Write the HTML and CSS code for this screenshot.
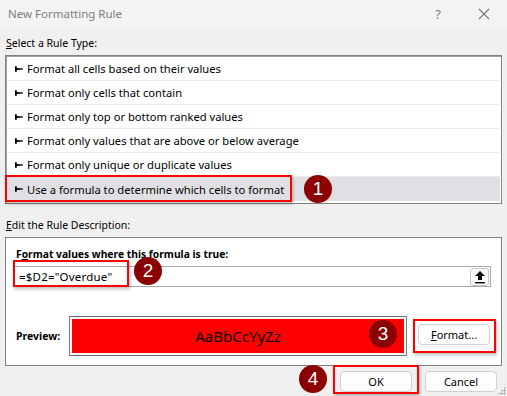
FILE: index.html
```html
<!DOCTYPE html>
<html>
<head>
<meta charset="utf-8">
<link rel="stylesheet" href="styles.css">
</head>
<body>
<div class="dialog">
  <div class="titlebar">
    <span class="title">New Formatting Rule</span>
    <span class="tb-help">?</span>
    <span class="tb-close">
      <svg width="12" height="12" viewBox="0 0 12 12"><path d="M1 1 L11 11 M11 1 L1 11" stroke="#777" stroke-width="1.1" fill="none"/></svg>
    </span>
  </div>
  <div class="section-label"><u>S</u>elect a Rule Type:</div>
  <div class="listbox">
    <div class="item"><svg class="arrow" width="8" height="6" viewBox="0 0 8 6"><path d="M0 0.3 H1.8 V2 L8 2.5 V3.5 L1.8 4 V5.7 H0 Z" fill="#000"/></svg>Format all cells based on their values</div>
    <div class="item"><svg class="arrow" width="8" height="6" viewBox="0 0 8 6"><path d="M0 0.3 H1.8 V2 L8 2.5 V3.5 L1.8 4 V5.7 H0 Z" fill="#000"/></svg>Format only cells that contain</div>
    <div class="item"><svg class="arrow" width="8" height="6" viewBox="0 0 8 6"><path d="M0 0.3 H1.8 V2 L8 2.5 V3.5 L1.8 4 V5.7 H0 Z" fill="#000"/></svg>Format only top or bottom ranked values</div>
    <div class="item"><svg class="arrow" width="8" height="6" viewBox="0 0 8 6"><path d="M0 0.3 H1.8 V2 L8 2.5 V3.5 L1.8 4 V5.7 H0 Z" fill="#000"/></svg>Format only values that are above or below average</div>
    <div class="item"><svg class="arrow" width="8" height="6" viewBox="0 0 8 6"><path d="M0 0.3 H1.8 V2 L8 2.5 V3.5 L1.8 4 V5.7 H0 Z" fill="#000"/></svg>Format only unique or duplicate values</div>
    <div class="item selected"><svg class="arrow" width="8" height="6" viewBox="0 0 8 6"><path d="M0 0.3 H1.8 V2 L8 2.5 V3.5 L1.8 4 V5.7 H0 Z" fill="#000"/></svg>Use a formula to determine which cells to format</div>
  </div>
  <div class="section-label second"><u>E</u>dit the Rule Description:</div>
  <div class="descbox">
    <div class="bold-label">F<u>o</u>rmat values where this formula is true:</div>
    <div class="formula-row">
      <span class="formula">=$D2="Overdue"</span>
      <span class="collapse-btn">
        <svg width="12" height="14" viewBox="0 0 12 14"><path d="M6 1 L11 6 L8 6 L8 10 L4 10 L4 6 L1 6 Z" fill="#000"/><rect x="1" y="12" width="10" height="1.4" fill="#000"/></svg>
      </span>
    </div>
    <div class="preview-row">
      <span class="bold-label">Preview:</span>
      <div class="preview-frame"><div class="preview-fill">AaBbCcYyZz</div></div>
      <button class="btn format-btn"><u>F</u>ormat...</button>
    </div>
  </div>
  <div class="footer">
    <button class="btn">OK</button>
    <button class="btn">Cancel</button>
  </div>
  <div class="grip"></div>

  <div class="hl hl1"></div>
  <div class="hl hl2"></div>
  <div class="hl hl3"></div>
  <div class="hl hl4"></div>
  <div class="badge b1">1</div>
  <div class="badge b2">2</div>
  <div class="badge b3">3</div>
  <div class="badge b4">4</div>
</div>
</body>
</html>
```
FILE: styles.css
```css
html, body {
  margin: 0;
  padding: 0;
  background: #f0f0f0;
}
.dialog {
  position: relative;
  width: 507px;
  height: 396px;
  overflow: hidden;
  font-family: "Noto Sans", "Open Sans", sans-serif;
  font-size: 11px;
  color: #000;
}
.titlebar {
  height: 27px;
  display: flex;
  align-items: center;
  padding-left: 8px;
  background: #f3f3f3;
}
.title {
  flex: 1;
  color: #808080;
  font-size: 11.5px;
}
.tb-help {
  color: #808080;
  font-size: 13px;
  width: 46px;
  text-align: center;
  margin-left: 4px;
}
.tb-close {
  width: 46px;
  display: flex;
  justify-content: center;
}
.section-label {
  padding: 8px 0 0 6px;
  height: 20px;
  line-height: 17px;
  font-size: 10.5px;
}
.section-label.second {
  padding-top: 13px;
  height: 20px;
}
.listbox {
  margin: 0 5px;
  border: 1px solid #828282;
  box-shadow: inset 1px 1px 0 #a0a0a0;
  background: #fff;
  padding: 1px 1px 2px 1px;
}
.item {
  height: 23px;
  line-height: 23px;
  border-bottom: 1px solid #ececec;
  padding-left: 8px;
  white-space: nowrap;
  display: flex;
  align-items: center;
  font-size: 11.2px;
}
.item:last-child {
  border-bottom: none;
  height: 24px;
}
.item.selected {
  background: #e0e0e4;
}
.arrow {
  margin-right: 4px;
  flex: none;
}
.descbox {
  margin: 0 5px;
  border: 1px solid #828282;
  background: #fff;
  height: 127px;
  padding: 0 9px 0 8px;
}
.bold-label {
  font-weight: bold;
  font-size: 10.3px;
}
.descbox > .bold-label {
  padding-top: 8px;
  height: 20px;
  line-height: 17px;
  padding-left: 2px;
}
.formula-row {
  height: 19px;
  border: 1px solid #a9a9a9;
  margin-right: 1px;
  display: flex;
  align-items: center;
  justify-content: space-between;
  padding-left: 4px;
}
.formula {
  font-size: 11.5px;
  letter-spacing: 0.2px;
}
.collapse-btn {
  width: 17px;
  height: 16px;
  border: 1px solid #c8c8c8;
  border-radius: 3px;
  background: #fbfbfb;
  display: flex;
  align-items: center;
  justify-content: center;
  margin-right: 1px;
}
.preview-row {
  display: flex;
  align-items: center;
  margin-top: 29px;
}
.preview-row .bold-label {
  width: 55px;
  box-sizing: border-box;
  padding-left: 2px;
  font-size: 10.5px;
  flex: none;
}
.preview-frame {
  width: 332px;
  height: 34px;
  border: 1px solid #767676;
  padding: 2px;
  box-sizing: content-box;
  flex: none;
}
.preview-fill {
  height: 34px;
  background: #ff0000;
  display: flex;
  align-items: center;
  justify-content: center;
  font-size: 15px;
}
.btn {
  font-family: "Noto Sans", "Open Sans", sans-serif;
  font-size: 11px;
  width: 72px;
  height: 21px;
  padding: 0;
  border: 1px solid #d0d0d0;
  border-radius: 4px;
  background: #fdfdfd;
  color: #000;
  flex: none;
}
.format-btn {
  margin-left: 11px;
  margin-top: -4px;
}
.footer {
  display: flex;
  justify-content: flex-end;
  gap: 13px;
  padding: 5px 10px 0 0;
}
.grip {
  position: absolute;
  right: 1px;
  bottom: 1px;
  width: 9px;
  height: 9px;
  background-image: radial-gradient(circle, #b5b5b5 1px, transparent 1.2px);
  background-size: 3px 3px;
  clip-path: polygon(100% 0, 100% 100%, 0 100%);
}
.hl {
  position: absolute;
  border: 2px solid #ff0000;
  box-shadow: 1px 2px 3px rgba(0,0,0,0.25);
}
.hl1 { left: 5px; top: 175px; width: 283px; height: 23px; }
.hl2 { left: 13px; top: 260px; width: 112px; height: 23px; }
.hl3 { left: 413px; top: 319px; width: 79px; height: 30px; }
.hl4 { left: 333px; top: 365px; width: 82px; height: 25px; }
.badge {
  position: absolute;
  width: 28px;
  height: 28px;
  border-radius: 50%;
  background: #8b0000;
  color: #fff;
  font-size: 19px;
  line-height: 28px;
  text-align: center;
  font-family: "Liberation Sans", sans-serif;
}
.b1 { left: 304px; top: 175px; }
.b2 { left: 134px; top: 257px; }
.b3 { left: 369px; top: 320px; }
.b4 { left: 299px; top: 365px; }
```
